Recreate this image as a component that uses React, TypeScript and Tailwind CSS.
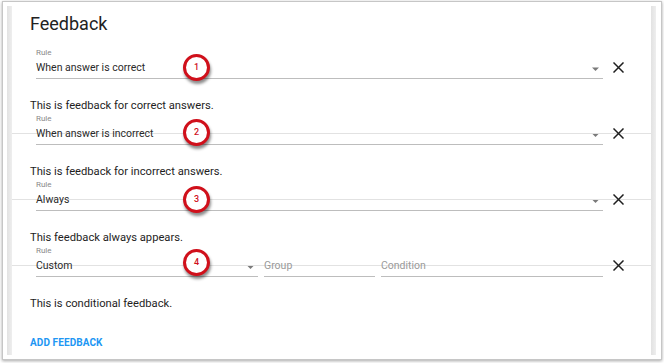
import React from "react";

type Item = {
  rule: string;
  text: string;
  mark: number;
  markTop: number;
  custom?: boolean;
  divider?: boolean;
};

const items: Item[] = [
  { rule: "When answer is correct", text: "This is feedback for correct answers.", mark: 1, markTop: 7, divider: false },
  { rule: "When answer is incorrect", text: "This is feedback for incorrect answers.", mark: 2, markTop: 6, divider: true },
  { rule: "Always", text: "This feedback always appears.", mark: 3, markTop: 7, divider: true },
  { rule: "Custom", text: "This is conditional feedback.", mark: 4, markTop: 4, custom: true, divider: true },
];

function Caret() {
  return (
    <svg width="7" height="4" viewBox="0 0 7 4" className="shrink-0">
      <path d="M0 0.5h7L3.5 4z" fill="#7a7a7a" />
    </svg>
  );
}

function CloseIcon() {
  return (
    <svg width="11" height="11" viewBox="0 0 11 11" className="shrink-0">
      <path d="M1 1l9 9M10 1l-9 9" stroke="#1f1f1f" strokeWidth="1.5" strokeLinecap="square" />
    </svg>
  );
}

function Marker({ n, top }: { n: number; top: number }) {
  return (
    <div
      className="absolute left-[171px] w-[27px] h-[27px] rounded-full border-[3px] border-[#d0101b] bg-white flex items-center justify-center shadow-[1px_3px_3px_rgba(0,0,0,0.45)] z-20"
      style={{ top }}
    >
      <span className="text-[9px] leading-none font-medium text-[#d0101b]">{n}</span>
    </div>
  );
}

function SelectField({ value, className }: { value: string; className: string }) {
  return (
    <div className={className}>
      <div className="h-[12px] text-[8px] leading-[12px] text-[#8a8a8a]">Rule</div>
      <div className="h-[18px] flex items-center justify-between border-b border-[#bdbdbd] box-content pb-[1px]">
        <span className="relative z-10 text-[10.5px] leading-[18px] text-[#2a2a2a]">{value}</span>
        <span className="mr-[4px] mt-[1px]"><Caret /></span>
      </div>
    </div>
  );
}

function TextField({ placeholder, className }: { placeholder: string; className: string }) {
  return (
    <div className={className}>
      <div className="h-[12px]" />
      <div className="h-[18px] flex items-center border-b border-[#bdbdbd] box-content pb-[1px]">
        <span className="relative z-10 text-[10.5px] leading-[18px] text-[#9a9a9a]">{placeholder}</span>
      </div>
    </div>
  );
}

function FeedbackItem({ item }: { item: Item }) {
  return (
    <div>
      <div className="relative flex items-start pl-[24px] pr-[27px]">
        {item.divider && <div className="absolute left-0 right-0 top-[20px] h-px bg-[#e2e2e2] z-0" />}
        {item.custom ? (
          <div className="flex-1 flex gap-[6px]">
            <SelectField value={item.rule} className="w-[222px]" />
            <TextField placeholder="Group" className="w-[111px]" />
            <TextField placeholder="Condition" className="flex-1" />
          </div>
        ) : (
          <SelectField value={item.rule} className="flex-1" />
        )}
        <div className="ml-[10px] mt-[15px] relative z-10">
          <CloseIcon />
        </div>
        <Marker n={item.mark} top={item.markTop} />
      </div>
      <div className="mt-[20px] pl-[18px] h-[14px] text-[11.2px] leading-[14px] text-[#1e1e1e]">{item.text}</div>
    </div>
  );
}

export default function App() {
  return (
    <div className="w-[664px] h-[363px] bg-white pt-[1px] pl-[2px] font-['Roboto',_'Liberation_Sans',_sans-serif]">
      <div className="w-[660px] h-[359px] border border-[#c6c6c6] shadow-[0_1px_3px_rgba(0,0,0,0.35)] pt-[4px] pb-[4px] pl-[4px] pr-[5px] flex bg-white">
        <div className="w-[5px] bg-gradient-to-r from-[#e2e2e2] to-[#eeeeee]" />
        <div className="flex-1 flex flex-col pt-[6px]">
          <h1 className="pl-[18px] h-[24px] text-[18px] leading-[24px] text-[#222]">Feedback</h1>
          <div className="mt-[11px] flex flex-col">
            {items.map((it) => (
              <FeedbackItem key={it.mark} item={it} />
            ))}
          </div>
          <div className="mt-[25px] pl-[18px] h-[14px] text-[10px] leading-[14px] font-bold text-[#2196f3] tracking-[0.1px]">
            ADD FEEDBACK
          </div>
        </div>
        <div className="w-[5px] bg-gradient-to-r from-[#e2e2e2] to-[#eeeeee]" />
      </div>
    </div>
  );
}
